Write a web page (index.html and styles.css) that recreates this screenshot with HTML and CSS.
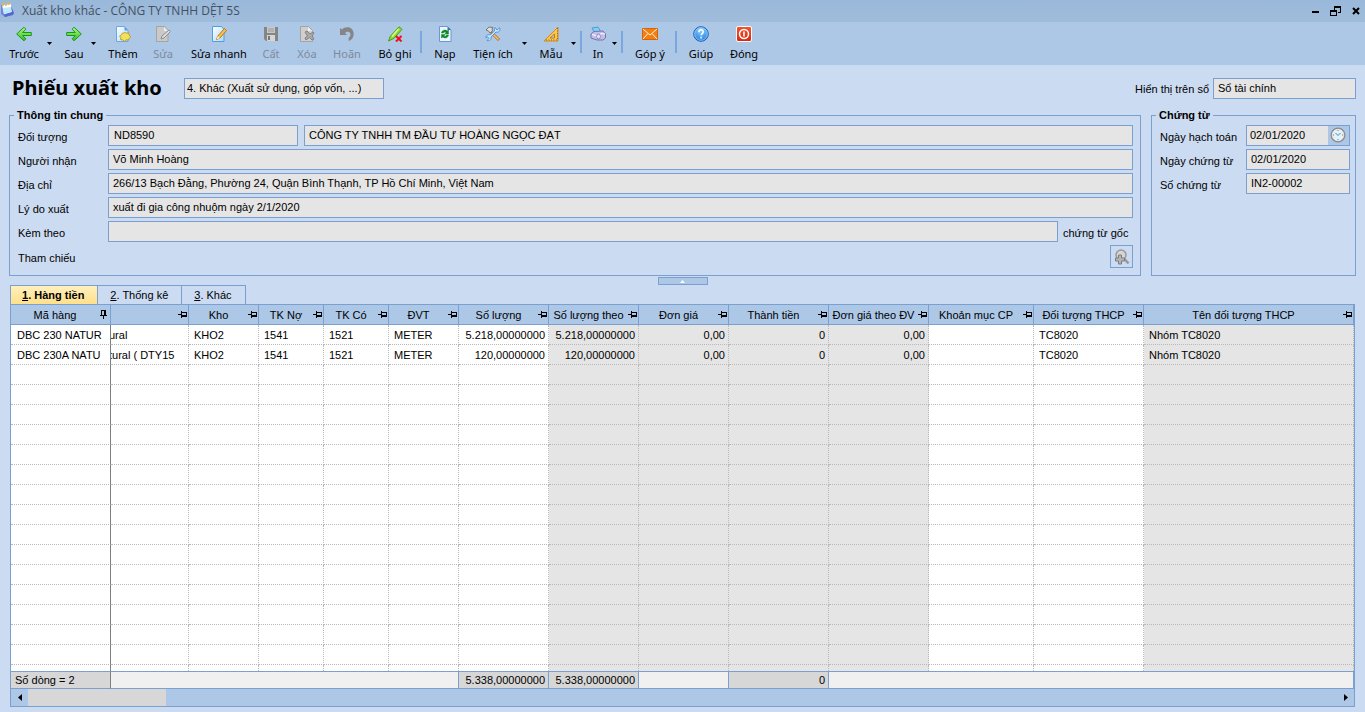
FILE: index.html
```html
<!DOCTYPE html>
<html lang="vi">
<head>
<meta charset="utf-8">
<title>Xuất kho khác - CÔNG TY TNHH DỆT 5S</title>
<link rel="stylesheet" href="styles.css">
</head>
<body>
<svg class="defs" aria-hidden="true">
  <defs>
    <linearGradient id="green" x1="0" y1="0" x2="0" y2="1"><stop offset="0" stop-color="#b8f58a"/><stop offset="1" stop-color="#2fbf1c"/></linearGradient>
    <linearGradient id="paper" x1="0" y1="0" x2="1" y2="1"><stop offset="0" stop-color="#ffffff"/><stop offset="1" stop-color="#a9dcf8"/></linearGradient>
    <linearGradient id="red" x1="0" y1="0" x2="0" y2="1"><stop offset="0" stop-color="#f0562f"/><stop offset="1" stop-color="#d8260e"/></linearGradient>
    <radialGradient id="blue" cx=".5" cy=".25" r=".8"><stop offset="0" stop-color="#8cd0ff"/><stop offset="1" stop-color="#1c78dc"/></radialGradient>
  </defs>
  <symbol id="pin" viewBox="0 0 9 9"><path d="M0 4h3v1H0zM3 1h1v7H3zM4 2h5v5H4zM4 3v2h4V3z" fill="#000" fill-rule="evenodd"/></symbol>
  <symbol id="caret" viewBox="0 0 5 3"><path d="M0 0h5L2.500 3z" fill="#000"/></symbol>
</svg>
<div class="window">
  <header class="titlebar">
    <svg class="app-icon" viewBox="0 0 16 16" aria-hidden="true"><path d="M1 3l10-1 2 10-8 3-4-3z" fill="#6f86dc"/><path d="M2 3l9-1 1 8-8 2z" fill="#fff"/><path d="M3 6l8-1 1 5-8 2z" fill="#bfe9fb"/><path d="M11 4l3 7-1 2-8 2-1-2 8-3z" fill="#5068cf"/><path d="M3 1v3M6 1v3M9 0v3" stroke="#e8b830" stroke-width="1.500"/></svg>
    <h1 class="caption">Xuất kho khác - CÔNG TY TNHH DỆT 5S</h1>
    <div class="window-controls">
      <button class="sys" aria-label="Thu nhỏ"><svg viewBox="0 0 11 11"><path d="M2 5h7v2H2z"/></svg></button>
      <button class="sys" aria-label="Khôi phục"><svg viewBox="0 0 11 11"><path d="M4 0h7v7H8V6h2V2H5v2H4zM0 4h7v6H0zM1 6v3h5V6z" fill-rule="evenodd"/></svg></button>
      <button class="sys" aria-label="Đóng cửa sổ"><svg viewBox="0 0 11 11"><path d="M3 2l6 6M9 2L3 8" stroke="#000" stroke-width="2"/></svg></button>
    </div>
  </header>

  <nav class="toolbar">
    <button class="tool"><svg viewBox="0 0 16 16"><path d="M.7 8L8 1.200 9.800 3.200 6.700 6.500H15.300v3H6.700l3.100 3.300L8 14.800z" fill="url(#green)" stroke="#159a18" stroke-linejoin="round"/></svg>Trước</button>
    <button class="drop" aria-label="Trước khác"><svg><use href="#caret"/></svg></button>
    <button class="tool"><svg viewBox="0 0 16 16"><path d="M15.300 8L8 1.200 6.200 3.200l3.100 3.300H.7v3h8.600l-3.100 3.300L8 14.800z" fill="url(#green)" stroke="#159a18" stroke-linejoin="round"/></svg>Sau</button>
    <button class="drop" aria-label="Sau khác"><svg><use href="#caret"/></svg></button>
    <button class="tool"><svg viewBox="0 0 16 16"><path d="M1.500.5h8l3.500 4v11H1.500z" fill="url(#paper)" stroke="#6ba8de"/><path d="M9.500.5v4H13" fill="#5a9ee0"/><path d="M10 6l1.500 1.200L14 7v2l1.800 1.800L14 12.500 13.500 14 11 13.800 9.500 15.500 8 14l-2.500-.5.300-2L4.500 10l2-1.200L7.500 7l1.500.2z" fill="#f4e05a" stroke="#b59318" stroke-width=".8"/></svg>Thêm</button>
    <button class="tool" disabled><svg viewBox="0 0 16 16"><path d="M1.500.5h8l3.500 4v11H1.500z" fill="#c9c9c9" stroke="#a4a4a4"/><path d="M9 1l4 4H9z" fill="#eee"/><path d="M14 4l1.500 1.500L9 12l-3 1 1-3z" fill="#ddd" stroke="#8d8d8d"/></svg>Sửa</button>
    <button class="tool"><svg viewBox="0 0 16 16"><path d="M1.500.5h9l2.500 3v12H1.500z" fill="url(#paper)" stroke="#4f9fe0"/><path d="M13.500 2.500L15.500 4.500 9 12l-3.500 1.500L6.800 10z" fill="#f9c04a" stroke="#bd7419"/><path d="M6.800 10L9 12l-3.500 1.500z" fill="#fff0c8"/></svg>Sửa nhanh</button>
    <button class="tool" disabled><svg viewBox="0 0 16 16"><path d="M1 1h14v14H3l-2-2z" fill="#858585"/><path d="M4 1h8v6H4z" fill="#c8c8c8"/><path d="M5 3h6M5 5h6" stroke="#999"/><path d="M4 9h8v6H4z" fill="#d6d6d6"/><path d="M5 10h2v4H5z" fill="#777"/></svg>Cất</button>
    <button class="tool" disabled><svg viewBox="0 0 16 16"><path d="M1.500.5h8l4 4v11h-12z" fill="#cfcfcf" stroke="#a4a4a4"/><path d="M9 1l4 4H9z" fill="#f0f0f0"/><path d="M6 6l2-1 3 3 3-2 1 1-2 3 2 3-2 1-2.500-2.500L7 14l-1-2 2.500-2z" fill="#aaa" stroke="#818181"/></svg>Xóa</button>
    <button class="tool" disabled><svg viewBox="0 0 16 16"><path d="M1 2l2 1.500C6 0 14 0 14.700 7.500c0 4-2 6.500-5 7.500v-3c2.300-1.500 2.500-5 .3-6-2-.8-3 0-4 1L8 9H1z" fill="#858585"/></svg>Hoãn</button>
    <button class="tool"><svg viewBox="0 0 16 16"><path d="M12 .8l3 2.500-8 9L1.500 15l1.700-4.500z" fill="#8edb36" stroke="#4c9c16"/><path d="M11.500 3L5 10.500" stroke="#d5ff8b" stroke-width="1.500"/><path d="M9 10l5.500 5.500M14.500 10L9 15.500" stroke="#f00f19" stroke-width="2"/></svg>Bỏ ghi</button>
    <span class="sep"></span>
    <button class="tool"><svg viewBox="0 0 16 16"><path d="M2.500.5h8l3.500 3.500v11.500H2.500z" fill="#edf6ff" stroke="#6d96d8"/><path d="M10.500.5v3.500H14" fill="#3c6fc4"/><path d="M4.500 7C5 3.500 9 3.500 10 5l1.500-1v4H8l1-1.500C8 5.800 7 6 6.500 7zM11.500 9C11 12.500 7 12.500 6 11l-1.500 1V8.500H8L7 10c1 .8 2 .2 2.500-1z" fill="#0d8a24" stroke="#0d8a24" stroke-width=".5"/></svg>Nạp</button>
    <button class="tool"><svg viewBox="0 0 16 16"><path d="M6 6l8 8" stroke="#b96e22" stroke-width="3"/><path d="M7 7l6.500 6.500" stroke="#f7c37a" stroke-width="1.500"/><path d="M1 4l3-3 4 .5-1 1.500.5 2L5 7 3.500 5z" fill="#ddd" stroke="#777"/><path d="M10 1.500L12 4l2.500-2.200c1.500 3-1 5-3.500 4.200L6 11c.8 2.500-1.500 4.500-4 3.500l2-2-1.500-1.800L1 12c-.5-2.500 2-4 4-3l4.500-4c-.5-1.500 0-2.700.5-3.500z" fill="#c6e6ff" stroke="#3e86cf" stroke-width=".8"/></svg>Tiện ích</button>
    <button class="drop" aria-label="Danh sách tiện ích"><svg><use href="#caret"/></svg></button>
    <button class="tool"><svg viewBox="0 0 16 16"><path d="M15 1v14H1z" fill="#f9c74c" stroke="#d58c19"/><path d="M11.500 8v4H7z" fill="#adc8e8" stroke="#c47c14"/><path d="M14.500 2v12H3" fill="none" stroke="#8d6426" stroke-dasharray="1 1.500"/></svg>Mẫu</button>
    <button class="drop" aria-label="Danh sách mẫu"><svg><use href="#caret"/></svg></button>
    <span class="sep"></span>
    <button class="tool"><svg viewBox="0 0 16 16"><path d="M2 2l6-1 3 5-6 2z" fill="#7fd0f5" stroke="#4c9fce"/><path d="M1 8l3-2.500 9-.5 2.500 3v4L13 14H7l-6-2z" fill="#c2bee8" stroke="#7773ae"/><path d="M2 8.500l6 1.500c1-2 4-3 7-2" fill="none" stroke="#fff"/><ellipse cx="8.500" cy="10.500" rx="2" ry="2.300" fill="#e5e3fa" stroke="#7773ae" stroke-width=".7"/></svg>In</button>
    <button class="drop" aria-label="Danh sách in"><svg><use href="#caret"/></svg></button>
    <span class="sep"></span>
    <button class="tool"><svg viewBox="0 0 16 16"><path d="M.5 2.500h15v11H.5z" fill="#f27f12" stroke="#d9630a"/><path d="M1 3l7 6 7-6M1 13l5-5.500M15 13l-5-5.500" fill="none" stroke="#fff3df"/></svg>Góp ý</button>
    <span class="sep"></span>
    <button class="tool"><svg viewBox="0 0 16 16"><circle cx="8" cy="8" r="7.300" fill="url(#blue)" stroke="#1d5eae"/><circle cx="8" cy="8" r="6.300" fill="none" stroke="#b9e0ff" stroke-width=".6"/><path d="M5.800 6.200C5.800 3 10.400 3.200 10.300 6c0 1.500-2.200 1.700-2.200 3.300M8.100 10.700v1.700" fill="none" stroke="#fff" stroke-width="1.500"/></svg>Giúp</button>
    <button class="tool"><svg viewBox="0 0 16 16"><rect x=".5" y=".5" width="15" height="15" rx="1.500" fill="url(#red)" stroke="#fff"/><circle cx="8" cy="8" r="4.500" fill="none" stroke="#fff" stroke-width="1.500"/><path d="M8 5.500v5" stroke="#fff" stroke-width="1.600"/></svg>Đóng</button>
  </nav>

  <main class="content">
    <div class="heading">
      <h2 class="doc-title">Phiếu xuất kho</h2>
      <input class="box kind" aria-label="Loại phiếu" readonly value="4. Khác (Xuất sử dụng, góp vốn, ...)">
      <label class="book-label" for="book">Hiển thị trên sổ</label>
      <input class="box book" id="book" readonly value="Sổ tài chính">
    </div>

    <div class="groups">
      <fieldset class="group general">
        <legend>Thông tin chung</legend>
        <div class="rows">
          <div class="row"><label for="obj">Đối tượng</label><input class="box code" id="obj" readonly value="ND8590"><input class="box grow" aria-label="Tên đối tượng" readonly value="CÔNG TY TNHH TM ĐẦU TƯ HOÀNG NGỌC ĐẠT"></div>
          <div class="row"><label for="recv">Người nhận</label><input class="box grow" id="recv" readonly value="Võ Minh Hoàng"></div>
          <div class="row"><label for="addr">Địa chỉ</label><input class="box grow" id="addr" readonly value="266/13 Bạch Đằng, Phường 24, Quận Bình Thạnh, TP Hồ Chí Minh, Việt Nam"></div>
          <div class="row"><label for="why">Lý do xuất</label><input class="box grow" id="why" readonly value="xuất đi gia công nhuộm ngày 2/1/2020"></div>
          <div class="row"><label for="att">Kèm theo</label><input class="box grow" id="att" readonly value=""><span class="suffix">chứng từ gốc</span></div>
          <div class="row"><label for="ref">Tham chiếu</label><button class="lookup" id="ref" aria-label="Chọn tham chiếu"><svg viewBox="0 0 16 16"><circle cx="7" cy="6" r="5" fill="#d6d6d6" stroke="#999" stroke-width="1.500"/><path d="M10.500 10l4 4.500" stroke="#999" stroke-width="2.600"/><path d="M4.500 6h3v3h3v3h-3v3h-3v-3h-3V9h3z" fill="#b5b5b5" stroke="#7c7c7c"/></svg></button></div>
        </div>
      </fieldset>
      <fieldset class="group voucher">
        <legend>Chứng từ</legend>
        <div class="rows">
          <div class="row"><label for="d1">Ngày hạch toán</label><span class="box date"><input id="d1" readonly value="02/01/2020"><button aria-label="Chọn giờ"><svg viewBox="0 0 16 16"><circle cx="8" cy="8" r="6.700" fill="#dff3fb" stroke="#8c8c8c" stroke-width="1.600"/><circle cx="8" cy="8" r="5.700" fill="none" stroke="#e7e7e7" stroke-width=".8"/><path d="M5.500 6L8 8.500 10.500 6" fill="none" stroke="#3f87a8"/><path d="M7.500 3h1v1h-1zM7.500 12h1v1h-1zM3 7.500h1v1H3zM12 7.500h1v1h-1z" fill="#e25b42"/></svg></button></span></div>
          <div class="row"><label for="d2">Ngày chứng từ</label><input class="box grow" id="d2" readonly value="02/01/2020"></div>
          <div class="row"><label for="no">Số chứng từ</label><input class="box grow" id="no" readonly value="IN2-00002"></div>
        </div>
      </fieldset>
    </div>

    <div class="splitter"><button class="collapse" aria-label="Thu gọn"><svg viewBox="0 0 5 3"><path d="M0 3h5L2.500 0z" fill="#fff"/></svg></button></div>

    <div class="tabs" role="tablist">
      <button class="tab active" role="tab" aria-selected="true"><u>1</u>. Hàng tiền</button>
      <button class="tab" role="tab" aria-selected="false"><u>2</u>. Thống kê</button>
      <button class="tab" role="tab" aria-selected="false"><u>3</u>. Khác</button>
    </div>

    <div class="grid">
      <div class="grid-body">
        <table>
          <colgroup><col class="w100"><col class="w78"><col class="w70"><col class="w65"><col class="w65"><col class="w70"><col class="w90"><col class="w90 ro"><col class="w90 ro"><col class="w100 ro"><col class="w100 ro"><col class="w105"><col class="w110"><col class="ro"></colgroup>
          <thead><tr>
            <th><div><span>Mã hàng</span><svg class="pinned"><use href="#pin"/></svg></div></th>
            <th><div><span></span><svg><use href="#pin"/></svg></div></th>
            <th><div><span>Kho</span><svg><use href="#pin"/></svg></div></th>
            <th><div><span>TK Nợ</span><svg><use href="#pin"/></svg></div></th>
            <th><div><span>TK Có</span><svg><use href="#pin"/></svg></div></th>
            <th><div><span>ĐVT</span><svg><use href="#pin"/></svg></div></th>
            <th><div><span>Số lượng</span><svg><use href="#pin"/></svg></div></th>
            <th><div><span>Số lượng theo</span><svg><use href="#pin"/></svg></div></th>
            <th><div><span>Đơn giá</span><svg><use href="#pin"/></svg></div></th>
            <th><div><span>Thành tiền</span><svg><use href="#pin"/></svg></div></th>
            <th><div><span>Đơn giá theo ĐV</span><svg><use href="#pin"/></svg></div></th>
            <th><div><span>Khoản mục CP</span><svg><use href="#pin"/></svg></div></th>
            <th><div><span>Đối tượng THCP</span><svg><use href="#pin"/></svg></div></th>
            <th><div><span>Tên đối tượng THCP</span><svg><use href="#pin"/></svg></div></th>
          </tr></thead>
          <tbody>
            <tr><td>DBC 230 NATUR</td><td class="scrolled">ural</td><td>KHO2</td><td>1541</td><td>1521</td><td>METER</td><td class="num">5.218,00000000</td><td class="num">5.218,00000000</td><td class="num">0,00</td><td class="num">0</td><td class="num">0,00</td><td></td><td>TC8020</td><td>Nhóm TC8020</td></tr>
            <tr><td>DBC 230A NATU</td><td class="scrolled">tural ( DTY15</td><td>KHO2</td><td>1541</td><td>1521</td><td>METER</td><td class="num">120,00000000</td><td class="num">120,00000000</td><td class="num">0,00</td><td class="num">0</td><td class="num">0,00</td><td></td><td>TC8020</td><td>Nhóm TC8020</td></tr>
            <tr><td><td><td><td><td><td><td><td><td><td><td><td><td><td></tr>
            <tr><td><td><td><td><td><td><td><td><td><td><td><td><td><td></tr>
            <tr><td><td><td><td><td><td><td><td><td><td><td><td><td><td></tr>
            <tr><td><td><td><td><td><td><td><td><td><td><td><td><td><td></tr>
            <tr><td><td><td><td><td><td><td><td><td><td><td><td><td><td></tr>
            <tr><td><td><td><td><td><td><td><td><td><td><td><td><td><td></tr>
            <tr><td><td><td><td><td><td><td><td><td><td><td><td><td><td></tr>
            <tr><td><td><td><td><td><td><td><td><td><td><td><td><td><td></tr>
            <tr><td><td><td><td><td><td><td><td><td><td><td><td><td><td></tr>
            <tr><td><td><td><td><td><td><td><td><td><td><td><td><td><td></tr>
            <tr><td><td><td><td><td><td><td><td><td><td><td><td><td><td></tr>
            <tr><td><td><td><td><td><td><td><td><td><td><td><td><td><td></tr>
            <tr><td><td><td><td><td><td><td><td><td><td><td><td><td><td></tr>
            <tr><td><td><td><td><td><td><td><td><td><td><td><td><td><td></tr>
            <tr><td><td><td><td><td><td><td><td><td><td><td><td><td><td></tr>
            <tr class="rest"><td><td><td><td><td><td><td><td><td><td><td><td><td><td></tr>
          </tbody>
          <tfoot><tr><td class="sum">Số dòng = 2</td><td colspan="5"></td><td class="sum num">5.338,00000000</td><td class="sum num">5.338,00000000</td><td></td><td class="sum num">0</td><td colspan="4"></td></tr></tfoot>
        </table>
      </div>
      <div class="hscroll">
        <button aria-label="Cuộn trái"><svg viewBox="0 0 4 7"><path d="M4 0v7L0 3.500z"/></svg></button>
        <span class="thumb"></span>
        <button aria-label="Cuộn phải"><svg viewBox="0 0 4 7"><path d="M0 0v7l4-3.500z"/></svg></button>
      </div>
    </div>
  </main>
</div>
</body>
</html>
```
FILE: styles.css
```css
:root {
  --line: #7ba0d0;
  --bar: #adc7e7;
  --page: #cbdbf1;
  --field: #e5e5e5;
  --dot: #b9b9b9;
}
* { box-sizing: border-box; }
body {
  margin: 0;
  background: var(--page);
  color: #000;
  font: 11px/14px "Liberation Sans", Arial, sans-serif;
}
button, input {
  margin: 0;
  padding: 0;
  border: 0;
  border-radius: 0;
  background: none;
  color: inherit;
  font: inherit;
}
.defs { position: absolute; width: 0; height: 0; }
.window { display: flex; flex-direction: column; height: 100vh; }

.titlebar {
  display: flex;
  align-items: center;
  height: 22px;
  padding: 0 4px 0 0;
  background: linear-gradient(#9ab8da, #9fbcdb);
}
.app-icon { width: 16px; height: 16px; margin-bottom: 2px; }
.caption {
  flex: 1;
  margin: 0 6px;
  color: #44505f;
  font: 12px/22px "Open Sans", "Noto Sans", sans-serif;
}
.window-controls { display: flex; gap: 9px; }
.sys { display: flex; width: 11px; height: 22px; align-items: center; }
.sys svg { width: 11px; height: 11px; }

.toolbar {
  display: grid;
  grid-template-columns: 38px 18px 26px 19px 34px 46px 66px 38px 34px 46px 50px 2px 46px 50px 17px 32px 13px 8px 20px 13px 4px 50px 2px 48px 38px;
  height: 43px;
  padding-left: 5px;
  background: var(--bar);
}
.tool {
  display: flex;
  flex-direction: column;
  align-items: center;
  padding-top: 4px;
  font: 11px/16px "Noto Sans", "Open Sans", sans-serif;
  white-space: nowrap;
}
.tool svg { flex: none; width: 16px; height: 16px; margin-bottom: 4px; }
.tool:disabled { color: #7f8a99; }
.drop { display: flex; padding: 20px 0 0 4px; }
.drop svg { width: 5px; height: 3px; }
.sep { width: 2px; height: 22px; margin-top: 9px; background: #7aa7dd; }

.content {
  display: flex;
  flex: 1;
  flex-direction: column;
  min-height: 0;
  padding: 13px 9px 5px;
}
.heading { display: flex; align-items: center; height: 21px; margin-bottom: 10px; }
.doc-title {
  width: 175px;
  margin: 0;
  padding: 0 0 2px 3px;
  font: bold 20px/21px "Noto Sans", "Open Sans", sans-serif;
  white-space: nowrap;
}
.box {
  height: 21px;
  min-width: 0;
  padding: 0 4px 1px;
  border: 1px solid var(--line);
  background: var(--field);
}
.kind { width: 200px; padding-left: 2px; }
.book-label { margin-left: auto; }
.book { width: 143px; margin-left: 4px; }

.groups { display: flex; gap: 10px; }
.group {
  min-width: 0;
  margin: 0;
  padding: 3px 7px 7px 8px;
  border: 1px solid var(--line);
}
.group legend {
  margin-left: -4px;
  padding: 0 3px;
  font-weight: bold;
  line-height: 13px;
}
.general { flex: 1; }
.voucher { width: 205px; padding-right: 5px; }
.rows { display: grid; grid-template-columns: minmax(0, 1fr); gap: 3px; }
.row { display: flex; align-items: center; }
.row label { flex: none; width: 90px; padding-top: 2px; }
.voucher .row label { width: 86px; }
.code { width: 190px; margin-right: 6px; padding-left: 5px; }
.grow { flex: 1; }
.suffix { width: 75px; padding: 2px 0 0 5px; white-space: nowrap; }
.lookup {
  display: flex;
  align-items: center;
  justify-content: center;
  width: 23px;
  height: 23px;
  margin-left: auto;
  border: 1px solid var(--line);
}
.lookup svg { width: 16px; height: 16px; }
.date { display: flex; flex: 1; padding: 0; }
.date input { flex: 1; min-width: 0; padding: 0 3px 1px; }
.date button { display: flex; width: 21px; padding: 1px 2px; background: var(--bar); }
.date svg { width: 16px; height: 16px; }

.splitter { display: flex; justify-content: center; height: 9px; padding-top: 1px; }
.collapse {
  display: flex;
  align-items: center;
  justify-content: center;
  width: 50px;
  border: 1px solid var(--line);
  background: var(--bar);
}
.collapse svg { width: 5px; height: 3px; }

.tabs { display: flex; margin: 0 1px; }
.tab {
  height: 19px;
  padding: 0 13px 0 12px;
  border: 1px solid var(--line);
  border-width: 1px 0 0 1px;
}
.tab:last-child { border-right-width: 1px; }
.tab.active {
  background: linear-gradient(#fff0bd, #ffe08a);
  padding-left: 11px;
  font-weight: bold;
}

.grid {
  display: flex;
  flex: 1;
  flex-direction: column;
  min-height: 0;
  margin: 0 1px;
  border: 1px solid var(--line);
}
.grid-body { flex: 1; min-height: 0; overflow: hidden; background: #fff; }
table {
  width: 100%;
  height: 100%;
  border-collapse: separate;
  border-spacing: 0;
  table-layout: fixed;
}
.w65 { width: 65px; }
.w70 { width: 70px; }
.w78 { width: 78px; }
.w90 { width: 90px; }
.w100 { width: 100px; }
.w105 { width: 105px; }
.w110 { width: 110px; }
.ro { background: var(--field); }
th {
  height: 20px;
  padding: 0;
  border: solid var(--line);
  border-width: 0 1px 1px 0;
  background: var(--bar);
  font-weight: normal;
}
th div { display: flex; align-items: center; height: 19px; padding-right: 1px; }
th span { flex: 1; overflow: hidden; white-space: nowrap; }
th svg { flex: none; width: 9px; height: 9px; }
.pinned { margin-right: 1px; transform: rotate(-90deg); }
td {
  height: 20px;
  padding: 0 5px;
  overflow: hidden;
  border: dotted var(--dot);
  border-width: 0 1px 1px 0;
  line-height: 14px;
  white-space: nowrap;
}
td:first-child { border-right: 1px solid #7f7f7f; padding: 0 0 0 6px; }
.num { padding: 0 3px 0 0; text-align: right; }
.scrolled { padding-left: 0; text-indent: -2px; }
.rest td { height: auto; border-bottom: 0; }
tfoot td {
  height: 18px;
  border: solid var(--line);
  border-width: 1px 1px 1px 0;
  background: #f0f0f0;
}
tfoot td:first-child { padding-left: 4px; border-color: var(--line) #7f7f7f var(--line) var(--line); }
tfoot .sum { background: #d7d7d7; }

.hscroll { display: flex; height: 17px; background: var(--bar); }
.hscroll button { display: flex; align-items: center; justify-content: center; width: 17px; }
.hscroll svg { width: 4px; height: 7px; }
.thumb { width: 138px; margin-right: auto; background: #d7d7d7; }
```
